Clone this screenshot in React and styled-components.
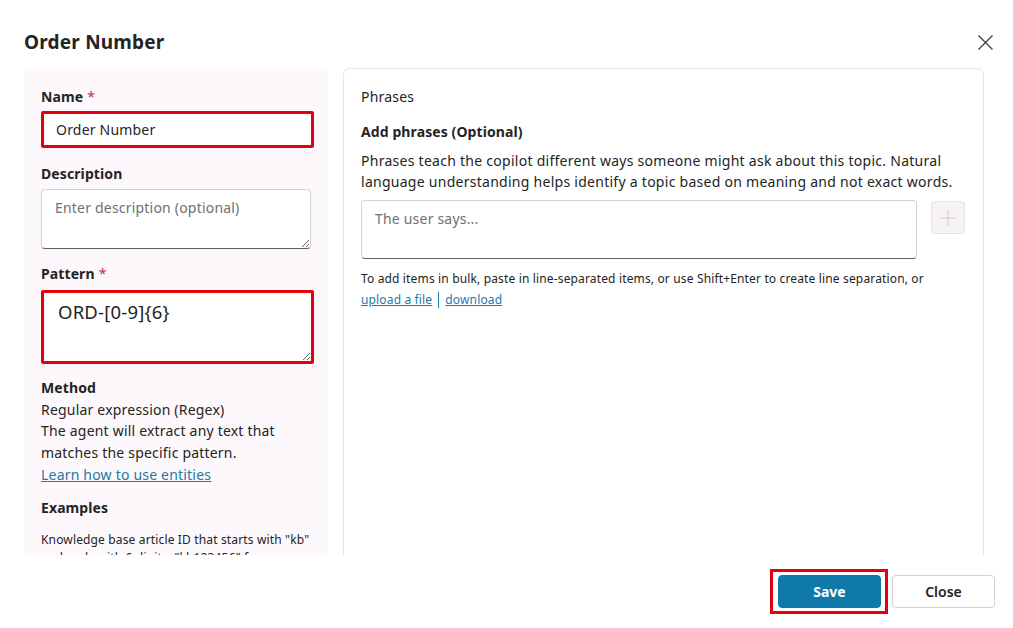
import React from "react";
import styled, { createGlobalStyle } from "styled-components";

const Global = createGlobalStyle`
  html, body { margin: 0; padding: 0; background: #fff; }
  body { font-family: "Noto Sans", "Segoe UI", sans-serif; color: #242424; }
  * { box-sizing: border-box; }
`;

const Dialog = styled.div`
  width: 1013px;
  height: 628px;
  display: flex;
  flex-direction: column;
  overflow: hidden;
`;

const Header = styled.div`
  display: flex;
  align-items: center;
  justify-content: space-between;
  height: 68px;
  padding: 16px 18px 0 24px;
`;

const Title = styled.h1`
  margin: 0;
  font-size: 19px;
  font-weight: 700;
  letter-spacing: 0.2px;
  color: #242424;
`;

const CloseIcon = styled.button`
  border: none;
  background: none;
  padding: 0;
  width: 20px;
  height: 20px;
  display: flex;
  align-items: center;
  justify-content: center;
  color: #424242;
`;

const Body = styled.div`
  display: flex;
  gap: 15px;
  height: 487px;
  flex-shrink: 0;
  padding: 0 29px 0 24px;
  overflow: hidden;
`;

const LeftPanel = styled.div`
  width: 304px;
  flex-shrink: 0;
  background: #fdf8fb;
  padding: 19px 14px 0 17px;
  display: flex;
  flex-direction: column;
  overflow: hidden;
  & > * { flex-shrink: 0; }
`;

const RightPanel = styled.div`
  flex: 1;
  border: 1px solid #e6e6e6;
  border-bottom: none;
  border-radius: 7px 7px 0 0;
  padding: 18px 18px 0 17px;
  display: flex;
  flex-direction: column;
  & > * { flex-shrink: 0; }
`;

const Label = styled.div`
  font-size: 14px;
  font-weight: 700;
  line-height: 20px;
  letter-spacing: 0.1px;
  margin-top: ${(p) => p.$mt || 0}px;
  color: #242424;
`;

const Req = styled.span`
  color: #c4314b;
  margin-left: 4px;
  font-weight: 400;
`;

const Input = styled.input`
  margin-top: ${(p) => p.$mt || 0}px;
  width: ${(p) => p.$w || 273}px;
  height: 37px;
  border: 3px solid #e3000f;
  border-radius: 2px;
  padding: 0 12px;
  font-family: inherit;
  font-size: 14px;
  letter-spacing: 0.2px;
  color: #242424;
  outline: none;
  background: #fff;
`;

const Area = styled.textarea`
  display: block;
  margin-top: ${(p) => p.$mt || 0}px;
  width: ${(p) => p.$w}px;
  height: ${(p) => p.$h}px;
  border: ${(p) => (p.$red ? "3px solid #e3000f" : "1px solid #d1d1d1")};
  border-bottom-color: ${(p) => (p.$red ? "#e3000f" : "#616161")};
  border-radius: ${(p) => (p.$red ? "2px" : "4px")};
  padding: ${(p) => (p.$red ? "9px 14px" : "8px 13px")};
  font-family: inherit;
  font-size: ${(p) => p.$fs || 14}px;
  letter-spacing: 0.2px;
  line-height: 20px;
  color: #242424;
  resize: ${(p) => (p.$noResize ? "none" : "vertical")};
  outline: none;
  background: #fff;
  &::placeholder { color: #707070; }
`;

const TextBlock = styled.div`
  margin-top: ${(p) => p.$mt || 0}px;
  font-size: 14px;
  line-height: 21.7px;
  letter-spacing: 0.2px;
  color: #242424;
`;

const Bold = styled.div`
  font-weight: 700;
  letter-spacing: 0.1px;
`;

const Link = styled.a`
  color: #1e7aa6;
  text-decoration: underline;
  cursor: pointer;
`;

const Small = styled.div`
  margin-top: ${(p) => p.$mt || 0}px;
  font-size: 12px;
  line-height: ${(p) => p.$lh || 21}px;
  letter-spacing: 0.15px;
  color: #242424;
`;

const Plain = styled.div`
  font-size: 14px;
  line-height: 20px;
  letter-spacing: 0.2px;
  color: #242424;
`;

const Desc = styled.div`
  margin-top: 8px;
  font-size: 14px;
  line-height: 21px;
  letter-spacing: 0.27px;
  color: #242424;
`;

const PhraseRow = styled.div`
  display: flex;
  align-items: flex-start;
  gap: 14px;
  margin-top: 8px;
`;

const PlusButton = styled.button`
  margin-top: 1px;
  width: 34px;
  height: 33px;
  border: 1px solid #e6e1e4;
  border-radius: 4px;
  background: #f7f2f5;
  display: flex;
  align-items: center;
  justify-content: center;
  padding: 0;
  color: #c8c3c6;
`;

const LinkRow = styled.div`
  display: flex;
  align-items: center;
  gap: 6px;
  font-size: 12px;
  line-height: 21px;
  letter-spacing: 0.15px;
`;

const Sep = styled.span`
  width: 1px;
  height: 16px;
  background: #1e7aa6;
`;

const Footer = styled.div`
  display: flex;
  justify-content: flex-end;
  align-items: center;
  gap: 4px;
  padding: 14px 18px 0 0;
`;

const Highlight = styled.span`
  display: flex;
  border: 3px solid #e3000f;
  padding: 3px 4px 3px 5px;
`;

const Button = styled.button`
  width: 103px;
  height: 33px;
  border-radius: 4px;
  font-family: inherit;
  font-size: 14px;
  border: 1px solid ${(p) => (p.$primary ? "#0f7aa9" : "#d1d1d1")};
  background: ${(p) => (p.$primary ? "#0f7aa9" : "#fff")};
  color: ${(p) => (p.$primary ? "#fff" : "#242424")};
  font-weight: ${(p) => (p.$primary ? 700 : 600)};
`;

export default function App() {
  return (
    <Dialog>
      <Global />
      <Header>
        <Title>Order Number</Title>
        <CloseIcon aria-label="Close">
          <svg width="17" height="17" viewBox="0 0 17 17">
            <path d="M1.5 1.5 L15.5 15.5 M15.5 1.5 L1.5 15.5" stroke="#424242" strokeWidth="1.4" fill="none" />
          </svg>
        </CloseIcon>
      </Header>
      <Body>
        <LeftPanel>
          <Label>
            Name<Req>*</Req>
          </Label>
          <Input $mt={4} defaultValue="Order Number" />
          <Label $mt={16}>Description</Label>
          <Area $mt={5} $w={270} $h={60} placeholder="Enter description (optional)" />
          <Label $mt={15}>
            Pattern<Req>*</Req>
          </Label>
          <Area $mt={6} $w={273} $h={74} $red $fs={18.5} defaultValue="ORD-[0-9]{6}" />
          <TextBlock $mt={13}>
            <Bold>Method</Bold>
            <div>Regular expression (Regex)</div>
            <div>The agent will extract any text that matches the specific pattern.</div>
            <Link>Learn how to use entities</Link>
          </TextBlock>
          <Label $mt={12}>Examples</Label>
          <Small $mt={13} $lh={18}>
            Knowledge base article ID that starts with "kb" and ends with 6 digits. "kb123456" for
            example.
          </Small>
        </LeftPanel>
        <RightPanel>
          <Plain>Phrases</Plain>
          <Label $mt={15}>Add phrases (Optional)</Label>
          <Desc>
            Phrases teach the copilot different ways someone might ask about this topic. Natural
            language understanding helps identify a topic based on meaning and not exact words.
          </Desc>
          <PhraseRow>
            <Area $w={556} $h={59} $noResize placeholder="The user says..." />
            <PlusButton aria-label="Add">
              <svg width="18" height="18" viewBox="0 0 18 18">
                <path d="M9 1 V17 M1 9 H17" stroke="#cdc8cb" strokeWidth="1" fill="none" />
              </svg>
            </PlusButton>
          </PhraseRow>
          <Small $mt={9}>
            To add items in bulk, paste in line-separated items, or use Shift+Enter to create line
            separation, or
          </Small>
          <LinkRow>
            <Link>upload a file</Link>
            <Sep />
            <Link>download</Link>
          </LinkRow>
        </RightPanel>
      </Body>
      <Footer>
        <Highlight>
          <Button $primary>Save</Button>
        </Highlight>
        <Button>Close</Button>
      </Footer>
    </Dialog>
  );
}
